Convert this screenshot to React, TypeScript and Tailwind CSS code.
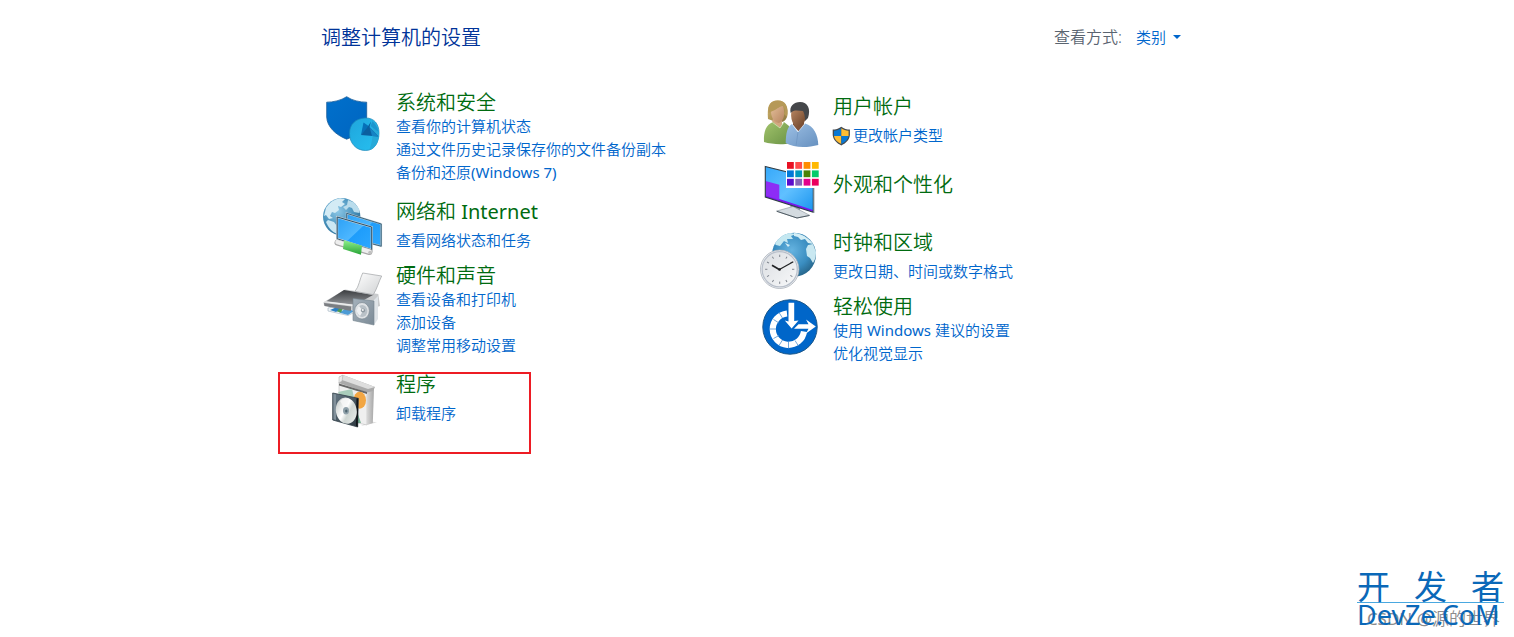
import type { ReactNode } from "react";
import clsx from "clsx";

function ShieldIcon() {
  return (
    <svg width="64" height="60" className="overflow-visible" aria-hidden="true">
      <defs>
        <linearGradient id="shieldBlue" x1="0" y1="0" x2="1" y2="1">
          <stop offset="0" stopColor="#0070cc" />
          <stop offset="1" stopColor="#0065c0" />
        </linearGradient>
        <linearGradient id="pieBlue" x1="0" y1="0" x2="1" y2="1">
          <stop offset="0" stopColor="#1fa5dc" />
          <stop offset="1" stopColor="#27c0f0" />
        </linearGradient>
      </defs>
      <path
        d="M25.7 6.7C20 10.5 12 12.2 5.7 12.2V27C6 37 15 45 25.7 49.2C37 45 45.4 37 45.7 27V12.2C39 12.2 31 10.5 25.7 6.7Z"
        fill="url(#shieldBlue)"
        stroke="#1a5d99"
        strokeWidth="0.8"
      />
      <path d="M44 28C53 27.5 58 34 58 43C58 53 53 60.5 44.5 60.5C35 60.5 28.5 53 28.5 43.5C28.5 34 35 28.5 44 28Z" fill="url(#pieBlue)" stroke="#1b87b8" strokeWidth="0.7" />
      <path d="M51 30.5C56 34 58.3 41 57.5 48C56.5 55 52 59.5 48 60.2C52 53 52.5 38 51 30.5Z" fill="#27a9d8" />
      <path d="M42.5 32.5L49 37L40 45Z" fill="#0670b8" />
      <path d="M50 31.5L48.5 37L57.5 46.5L40 45L46 38Z" fill="#0b5f9f" />
      <path d="M49.5 36L51.5 31.5C54 33.5 57 38 57.5 42Z" fill="#1c96cf" />
      <path d="M48.5 37L51 46L57.5 46.5Z" fill="#1583c4" />
    </svg>
  );
}

function NetworkIcon() {
  return (
    <svg width="64" height="60" className="overflow-visible" aria-hidden="true">
      <defs>
        <radialGradient id="netGlobe" cx="0.4" cy="0.35" r="0.7">
          <stop offset="0" stopColor="#8cc7e6" />
          <stop offset="0.6" stopColor="#4a93bd" />
          <stop offset="1" stopColor="#2b6e96" />
        </radialGradient>
        <linearGradient id="netScreen" x1="0" y1="0" x2="1" y2="1">
          <stop offset="0" stopColor="#2ba0f5" />
          <stop offset="0.5" stopColor="#4db7ff" />
          <stop offset="0.52" stopColor="#1e9dfb" />
          <stop offset="1" stopColor="#2ea8ff" />
        </linearGradient>
        <linearGradient id="netGreen" x1="0" y1="0" x2="0" y2="1">
          <stop offset="0" stopColor="#8ff08b" />
          <stop offset="1" stopColor="#27a336" />
        </linearGradient>
      </defs>
      <circle cx="20.7" cy="17.7" r="18.7" fill="url(#netGlobe)" />
      <path d="M5 9C8 4 13 0 19-.8L24 0L21 3L24 5L20 8L17 7L18 11L14 14L11 13L9 17L12 19L8 20L5 16L3 17Z" fill="#d3ebf5" />
      <path d="M27 1L33 3.5L38 9.5L38.5 14L33 13L31 9L28 8L25 11L22 8L26 6Z" fill="#b9dcec" />
      <path d="M7 21L13 23L16 27V35C11 33 7 28 5 23Z" fill="#cbe7f3" />
      <path d="M25.7 14.3L60.2 25V47.2L25.7 38Z" fill="url(#netScreen)" stroke="#c3ccd1" strokeWidth="1.8" />
      <path d="M25.7 14.3L60.2 25V47.2L25.7 38Z" fill="none" stroke="#285977" strokeWidth="0.9" />
      <path d="M16.2 18L50.7 28V51L16.2 39.8Z" fill="url(#netScreen)" stroke="#c9d1d5" strokeWidth="2" />
      <path d="M16.2 18L50.7 28V51L16.2 39.8Z" fill="none" stroke="#264f6b" strokeWidth="1" />
      <path d="M16.5 43.5L48.5 53" stroke="#a8a8a8" strokeWidth="6" strokeLinecap="round" />
      <path d="M16.5 43.1L48.5 52.6" stroke="#eeeeee" strokeWidth="4.5" strokeLinecap="round" />
      <path d="M23 41.3L41 46.7L40 55.8L22 50Z" fill="url(#netGreen)" />
      <circle cx="49" cy="53.5" r="1.8" fill="#c1c1c1" />
    </svg>
  );
}

function HardwareIcon() {
  return (
    <svg width="64" height="60" className="overflow-visible" aria-hidden="true">
      <defs>
        <linearGradient id="hwPaper" x1="0" y1="0" x2="1" y2="1">
          <stop offset="0" stopColor="#ffffff" />
          <stop offset="1" stopColor="#cfd1d3" />
        </linearGradient>
        <linearGradient id="hwTop" x1="0" y1="0" x2="0" y2="1">
          <stop offset="0" stopColor="#3a3c3f" />
          <stop offset="1" stopColor="#93969a" />
        </linearGradient>
        <linearGradient id="hwSpeaker" x1="0" y1="0" x2="1" y2="1">
          <stop offset="0" stopColor="#a6b2bc" />
          <stop offset="1" stopColor="#7b8a96" />
        </linearGradient>
      </defs>
      <path d="M7 45L20 42L36 48L27 52.5L7 48Z" fill="#f2f6f9" stroke="#9fb0bd" strokeWidth="0.6" />
      <path d="M9 47L17 43.5L22 45L15 49Z" fill="#2c7fc4" />
      <path d="M18 49.5L25 45.5L33 48L27 52Z" fill="#4d9bd5" />
      <path d="M16 48.5L19 44L22 45L20 49.5Z" fill="#4f9c54" />
      <path d="M2.5 39.3L24 26.5L57.3 31L59 43L40 49L29 46.5L3 42.5Z" fill="#c9cbcd" />
      <path d="M3 40L30 43.5V48L3.5 43Z" fill="#7b7e82" />
      <path d="M5 38.5L23 27L52 32L34 42Z" fill="url(#hwTop)" />
      <path d="M3 39.3L31 43L34 41.8L5 38.3Z" fill="#eceded" />
      <path d="M34 28.3C38 24 39 15 41.7 10L60.7 13C58 18 56 26 52.3 31.7Z" fill="url(#hwPaper)" stroke="#a0a3a6" strokeWidth="0.7" />
      <path d="M52 38L57 33V56L53 62Z" fill="#dfe4e8" />
      <path d="M32 35.5L53 38V62L32 57.5Z" fill="url(#hwSpeaker)" stroke="#76848f" strokeWidth="0.6" />
      <ellipse cx="41" cy="47.8" rx="7.4" ry="8.3" fill="#dfe2e5" stroke="#7c8992" strokeWidth="0.7" />
      <ellipse cx="41.2" cy="48" rx="5.2" ry="6" fill="#b9c1c7" />
      <path d="M38 43L42 48L39 53C35 50 35 46 38 43Z" fill="#eef0f2" />
      <circle cx="42" cy="47.5" r="2.1" fill="#8e99a1" />
      <circle cx="41.8" cy="47" r="1" fill="#f5f5f5" />
    </svg>
  );
}

function ProgramsIcon() {
  return (
    <svg width="64" height="60" className="overflow-visible" aria-hidden="true">
      <defs>
        <linearGradient id="boxSide" x1="0" y1="0" x2="1" y2="0">
          <stop offset="0" stopColor="#d7d7d7" />
          <stop offset="1" stopColor="#a7a7a7" />
        </linearGradient>
        <linearGradient id="discFace" x1="0" y1="0" x2="1" y2="1">
          <stop offset="0" stopColor="#b5bdbb" />
          <stop offset="0.45" stopColor="#ffffff" />
          <stop offset="0.6" stopColor="#cfd6d3" />
          <stop offset="1" stopColor="#eef1ef" />
        </linearGradient>
        <linearGradient id="caseFace" x1="0" y1="0" x2="1" y2="1">
          <stop offset="0" stopColor="#667885" />
          <stop offset="1" stopColor="#2c373e" />
        </linearGradient>
      </defs>
      <path d="M40 54L56 50.5L48 49Z" fill="#dfdfdf" />
      <path d="M18 10L46 19V53L18 47Z" fill="#efefef" stroke="#bcbcbc" strokeWidth="0.6" />
      <path d="M46 19L53 16L51.8 51L46 53Z" fill="url(#boxSide)" />
      <path d="M18 5L22 3L54 15L52 19L46 20.5L18 11Z" fill="#aaaaaa" />
      <path d="M22 3L54 15L47 17L21 8Z" fill="#dedede" />
      <path d="M18 5L22 3L21 9L18 11Z" fill="#ececec" stroke="#aaaaaa" strokeWidth="0.5" />
      <path d="M18 11.5L46 20V22L18 13.5Z" fill="#686868" />
      <path d="M17 20L31 17L39 50L34 51Z" fill="#a9cdbb" />
      <ellipse cx="38.7" cy="28.3" rx="6.3" ry="8.5" fill="#f2a643" />
      <path d="M35 37L40 51H35Z" fill="#74ac8f" />
      <path d="M11.7 21L37.3 26.3L36.7 55L11.7 48Z" fill="url(#caseFace)" stroke="#34414a" strokeWidth="0.8" />
      <path d="M12.5 22L15 22.5V48L12.5 47.3Z" fill="#81909a" />
      <path d="M35.5 26.5L37.3 26.3L36.7 55L35 54Z" fill="#101417" />
      <ellipse cx="25.3" cy="38.7" rx="10.4" ry="13.2" transform="rotate(-10 25.3 38.7)" fill="url(#discFace)" />
      <path d="M25 38.7L19 29C22 26 25 26 28 27Z" fill="#f8f8f8" opacity="0.8" />
      <ellipse cx="25" cy="38.7" rx="3" ry="3.7" fill="#8fa0a9" />
      <ellipse cx="25.3" cy="38.9" rx="1.2" ry="1.5" fill="#4e6570" />
    </svg>
  );
}

function UsersIcon() {
  return (
    <svg width="64" height="60" viewBox="0 4 64 60" className="overflow-visible" aria-hidden="true">
      <defs>
        <linearGradient id="hairBlonde" x1="0" y1="0" x2="1" y2="1">
          <stop offset="0" stopColor="#d5b86e" />
          <stop offset="1" stopColor="#8c7540" />
        </linearGradient>
        <linearGradient id="skinLight" x1="0" y1="0" x2="1" y2="1">
          <stop offset="0" stopColor="#e2bd98" />
          <stop offset="1" stopColor="#b78560" />
        </linearGradient>
        <linearGradient id="skinDark" x1="0" y1="0" x2="1" y2="1">
          <stop offset="0" stopColor="#b88662" />
          <stop offset="1" stopColor="#694027" />
        </linearGradient>
        <linearGradient id="greenTop" x1="0" y1="0" x2="1" y2="1">
          <stop offset="0" stopColor="#a2c36c" />
          <stop offset="1" stopColor="#6a9345" />
        </linearGradient>
        <linearGradient id="blueTop" x1="0" y1="0" x2="1" y2="1">
          <stop offset="0" stopColor="#9dc0e5" />
          <stop offset="1" stopColor="#6690bf" />
        </linearGradient>
      </defs>
      <path d="M10 29C9 17 11 10.5 19.5 10.5C28 10.5 30.5 17 29 27C27 32 23 33 18 32Z" fill="url(#hairBlonde)" />
      <path d="M15 28H24V37L19 40L14 33Z" fill="#d2a780" />
      <path d="M6 52C5.5 41 8 35 15 32L22 38L26 32L31 36L33 53C24 55.5 13 54 6 52Z" fill="url(#greenTop)" />
      <path d="M14 32L22 38L26 32" fill="none" stroke="#d6e4ba" strokeWidth="0.8" />
      <path d="M13 19C17 20 22 16 25 16C27 22 27 30 21 33C15 32 12.5 26 13 19Z" fill="url(#skinLight)" />
      <path d="M10.5 23C15 21 21 18 24 15C27 17 27 21 26 24L29 27C31 18 28 10.5 20 10.5C12 10.5 9.5 16 10.5 23Z" fill="#b69957" />
      <path d="M35 28H46V35L41 42L35 35Z" fill="#80533a" />
      <path d="M27.7 53C28 43 29 37 34 34L40 42L47 33.5C56 36 60 45 60.3 55C49 58 36 58 27.7 53Z" fill="url(#blueTop)" />
      <path d="M34 34L40 42L47 33.5" fill="none" stroke="#d7e5f4" strokeWidth="0.8" />
      <path d="M40 42L38 56" stroke="#6f96c3" strokeWidth="0.8" />
      <path d="M33.5 21C38 18 44 19 48 21C49 30 45 37 39 37C35 36 32 28 33.5 21Z" fill="url(#skinDark)" />
      <path d="M32.7 23C31 16 36 12 42 12C50 12 53 19 50 28L47 31C47 25 46 23 45 21C41 21 36 19 32.7 23Z" fill="#45474a" />
    </svg>
  );
}

const swatches = [
  "#e81123", "#ff4b4b", "#ff8c00", "#ffb900",
  "#0078d7", "#0099bc", "#498205", "#00cc6a",
  "#5c0dcc", "#8764b8", "#e3008c", "#ea005e",
];

function AppearanceIcon() {
  return (
    <svg width="64" height="60" viewBox="0 1 64 60" className="overflow-visible" aria-hidden="true">
      <defs>
        <linearGradient id="desktopBlue" x1="0" y1="0" x2="1" y2="1">
          <stop offset="0" stopColor="#35a8fa" />
          <stop offset="0.5" stopColor="#60c0ff" />
          <stop offset="1" stopColor="#1893ee" />
        </linearGradient>
      </defs>
      <path d="M32 46L42 49V56L33 54Z" fill="#8d9aa3" />
      <path d="M18.7 54L35 49.5L51.5 58.2L39 61Z" fill="#d4dbe0" stroke="#8b969d" strokeWidth="0.6" />
      <path d="M18.7 54.3L39 61L51.5 58.5" fill="none" stroke="#505c64" strokeWidth="1" />
      <path d="M7.3 9.5L55.3 21.5V55.3L7.3 40Z" fill="url(#desktopBlue)" />
      <path d="M7.5 37.5L55 53V55L7.5 40Z" fill="#7a16ef" />
      <path d="M7.5 24L21.3 27.8V43L7.5 38.5Z" fill="#8d2df5" />
      <path d="M7.3 9.5L55.3 21.5V55.3L7.3 40Z" fill="none" stroke="#313c44" strokeWidth="1.1" />
      <path d="M56.2 22V56" stroke="#c2c9cd" strokeWidth="1.1" />
      <path d="M28 5H61.5V31H28Z" fill="#ffffff" />
      {swatches.map((color, i) => (
        <rect key={color} x={29 + (i % 4) * 8.3} y={5 + Math.floor(i / 4) * 8.4} width="6.8" height="6.8" fill={color} />
      ))}
    </svg>
  );
}

function ClockIcon() {
  return (
    <svg width="64" height="60" className="overflow-visible" aria-hidden="true">
      <defs>
        <radialGradient id="clockGlobe" cx="0.45" cy="0.4" r="0.65">
          <stop offset="0" stopColor="#65b3e0" />
          <stop offset="0.6" stopColor="#3a8dc0" />
          <stop offset="1" stopColor="#245f82" />
        </radialGradient>
        <linearGradient id="clockFace" x1="0" y1="0" x2="1" y2="1">
          <stop offset="0" stopColor="#dadde1" />
          <stop offset="1" stopColor="#f8f9fa" />
        </linearGradient>
      </defs>
      <circle cx="36" cy="24.7" r="22" fill="url(#clockGlobe)" />
      <path d="M17 14C20 8 26 4 32 3L38 4L33 6L35 9L29 9L30 13L26 11L22 16L18 15Z" fill="#c5e8f1" />
      <path d="M36 3C43 3 51 8 55 14L50 13L47 9L43 10L40 7L36 6Z" fill="#d4eef5" />
      <path d="M50 15L55 14L58 22C58 27 57 30 55 33L52 28L49 26L48 19Z" fill="#c9e8f1" />
      <path d="M27 13L32 15L30 17Z" fill="#d7eef5" />
      <circle cx="21.7" cy="39.3" r="19.2" fill="#f1f3f5" stroke="#a9b0b9" strokeWidth="0.8" />
      <circle cx="21.7" cy="39.3" r="17.6" fill="url(#clockFace)" stroke="#b8bfca" strokeWidth="1.3" />
      {[0, 30, 60, 90, 120, 150, 180, 210, 240, 270, 300, 330].map((angle) => (
        <path key={angle} d="M21.7 24.7V27" transform={`rotate(${angle} 21.7 39.3)`} stroke="#777d86" strokeWidth="0.9" />
      ))}
      <path d="M14 35.3L21.7 39.8" stroke="#202224" strokeWidth="1.7" />
      <path d="M20.5 40L35.3 31.7" stroke="#202224" strokeWidth="1.2" />
      <circle cx="21.7" cy="39.5" r="1.2" fill="#202224" />
    </svg>
  );
}

function EaseIcon() {
  return (
    <svg width="64" height="60" className="overflow-visible" aria-hidden="true">
      <circle cx="32" cy="33" r="27.2" fill="#0066c9" stroke="#1c5789" strokeWidth="1" />
      <path d="M29 19.5A15.7 15.7 0 1 0 46 37.5" fill="none" stroke="#ffffff" strokeWidth="6.2" />
      <g stroke="#4f91ce" strokeWidth="0.8">
        <path d="M15.5 25.5L21 29" />
        <path d="M11.5 35H18" />
        <path d="M15.5 44.5L21 41.5" />
        <path d="M21 51.5L24.5 46" />
        <path d="M30.5 48V54.5" />
        <path d="M37 46.5L40.5 52" />
        <path d="M21 18.5L24.5 24" />
      </g>
      <path d="M30.5 8.8H36.2V27L40.5 26.5L33.6 34.5L26.8 26.5L30.5 27.5Z" fill="#ffffff" />
      <path d="M36 34.8L40.5 30.2H50.5L48 25.5L57.8 32.6L48 39.5L50.5 34.8Z" fill="#ffffff" />
    </svg>
  );
}

function UacShield() {
  return (
    <svg width="20" height="20" viewBox="1 0 20 20" className="shrink-0 overflow-visible" aria-hidden="true">
      <path d="M9.3.7C6.5 2.8 3.5 3.6.7 3.6V9C1.2 14 5 17.5 9.3 19.4C13.7 17.5 17.5 14 17.9 9V3.6C15 3.6 12 2.8 9.3.7Z" fill="#454b50" />
      <path d="M9.3 2.3V10H2V4.8C4.8 4.7 7 4 9.3 2.3Z" fill="#0878d4" />
      <path d="M9.3 2.3C11.5 4 13.8 4.7 16.6 4.8V10H9.3Z" fill="#ffbd34" />
      <path d="M2 10H9.3V18C5.5 16.2 2.5 13.5 2 10Z" fill="#ffbd34" />
      <path d="M9.3 10H16.6C16 13.5 13 16.2 9.3 18Z" fill="#0878d4" />
    </svg>
  );
}

// Latin words keep the regular weight beside the lighter Chinese text
function Label({ text }: { text: string }) {
  return (
    <span className="whitespace-pre">
      {text.split(/([\x20-\x7e]+)/).map((part, i) =>
        i % 2 ? <span key={i} className="font-normal">{part}</span> : part
      )}
    </span>
  );
}

interface CategoryProps {
  icon: ReactNode;
  title: string;
  links?: string[];
  shield?: boolean;
  highlighted?: boolean;
}

function Category({ icon, title, links = [], shield, highlighted }: CategoryProps) {
  return (
    <section
      className={clsx(
        "relative flex",
        links.length > 1 && "mb-[15px]",
        links.length === 1 && "mb-1 min-h-[60px]",
        links.length === 0 && "mb-3 min-h-[60px]"
      )}
    >
      <div className="w-[75px] shrink-0">{icon}</div>
      <div className={clsx("min-w-0", links.length === 0 && "pt-3.5")}>
        <h2 className="text-[20px] leading-[25px]">
          <a href="#" className="text-[#006b10] hover:underline">
            <Label text={title} />
          </a>
        </h2>
        <ul className={clsx(links.length === 1 && "mt-[5px]")}>
          {links.map((link) => (
            <li key={link} className="text-[15px] leading-[23px]">
              <a href="#" className="flex items-center text-[#0066cc] hover:underline">
                {shield && <UacShield />}
                <Label text={link} />
              </a>
            </li>
          ))}
        </ul>
      </div>
      {highlighted && (
        <div className="pointer-events-none absolute top-0 -left-[43px] h-[82px] w-[253px] border-2 border-[#ed1c24]" />
      )}
    </section>
  );
}

function Watermark() {
  return (
    <div className="absolute right-2.5 bottom-1.5 w-[147px] font-normal text-[#0a68b8]">
      <div className="flex justify-between border-b border-[#4aa8e0] text-[33px] leading-[30px]">
        <span>开</span>
        <span>发</span>
        <span>者</span>
      </div>
      <div className="relative h-7">
        <span className="absolute top-1 right-1 text-[17px] leading-6 font-[350] text-[#8c8c8c]">
          <Label text="CSDN @源的世界" />
        </span>
        <span className="relative text-[27px] leading-6 whitespace-nowrap">DevZe.CoM</span>
      </div>
    </div>
  );
}

export default function App() {
  return (
    <div className="relative min-h-screen bg-white pr-3 font-['Noto_Sans','Noto_Sans_CJK_SC',sans-serif] font-[350]">
      <main className="mx-auto max-w-[860px] pt-6">
        {/* Header */}
        <header className="flex items-start justify-between">
          <h1 className="text-[20px] leading-7 text-[#003399]">调整计算机的设置</h1>
          <div className="flex items-center">
            <label htmlFor="view-mode" className="mr-3.5 text-[16px] leading-[26px] text-[#5a6470]">
              查看方式:
            </label>
            <div className="relative flex items-center">
              <select
                id="view-mode"
                defaultValue="category"
                className="w-[45px] appearance-none bg-transparent text-[15px] leading-[23px] text-[#0066cc] outline-none"
              >
                <option value="category">类别</option>
                <option value="large">大图标</option>
                <option value="small">小图标</option>
              </select>
              <svg width="8" height="4" className="pointer-events-none absolute right-0" aria-hidden="true">
                <path d="M0 0H8L4 4Z" fill="#0066cc" />
              </svg>
            </div>
          </div>
        </header>

        {/* Categories */}
        <div className="grid grid-cols-[437px_1fr] pt-[38px]">
          <div>
            <Category
              icon={<ShieldIcon />}
              title="系统和安全"
              links={["查看你的计算机状态", "通过文件历史记录保存你的文件备份副本", "备份和还原(Windows 7)"]}
            />
            <Category icon={<NetworkIcon />} title="网络和 Internet" links={["查看网络状态和任务"]} />
            <Category
              icon={<HardwareIcon />}
              title="硬件和声音"
              links={["查看设备和打印机", "添加设备", "调整常用移动设置"]}
            />
            <Category icon={<ProgramsIcon />} title="程序" links={["卸载程序"]} highlighted />
          </div>
          <div className="pt-1">
            <Category icon={<UsersIcon />} title="用户帐户" links={["更改帐户类型"]} shield />
            <Category icon={<AppearanceIcon />} title="外观和个性化" />
            <Category icon={<ClockIcon />} title="时钟和区域" links={["更改日期、时间或数字格式"]} />
            <Category icon={<EaseIcon />} title="轻松使用" links={["使用 Windows 建议的设置", "优化视觉显示"]} />
          </div>
        </div>
      </main>
      <Watermark />
    </div>
  );
}
